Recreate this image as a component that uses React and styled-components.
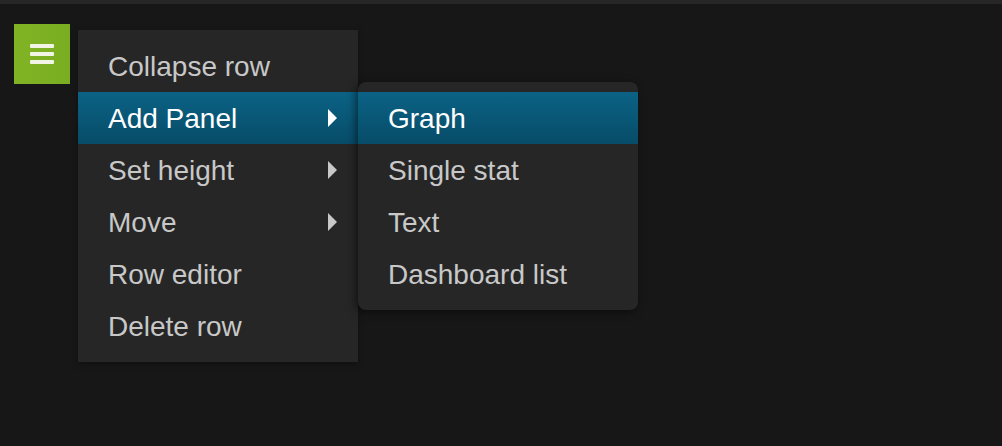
import React from 'react'
import styled, {createGlobalStyle} from 'styled-components'

const GlobalStyle = createGlobalStyle`
  html, body {
    margin: 0;
    padding: 0;
    background: #171717;
    font-family: "Liberation Sans", Arial, sans-serif;
  }
`

const Page = styled.div`
  width: 1002px;
  height: 446px;
  background: #171717;
  overflow: hidden;
`

const TopBar = styled.div`
  height: 4px;
  background: #262626;
`

const Row = styled.div`
  display: flex;
  align-items: flex-start;
  padding: 20px 0 0 14px;
`

const MenuButton = styled.button`
  width: 56px;
  height: 60px;
  border: 0;
  padding: 0;
  background: linear-gradient(90deg, #80b424, #7aae22);
  display: flex;
  flex-direction: column;
  align-items: center;
  justify-content: center;
  gap: 4px;
  margin-right: 8px;
`

const Bar = styled.span`
  display: block;
  width: 24px;
  height: 4px;
  border-radius: 1px;
  background: #f2f4e6;
`

const Menu = styled.ul`
  list-style: none;
  margin: 6px 0 0;
  padding: 10px 0;
  width: 280px;
  background: #262626;
  box-shadow: 0 2px 6px rgba(0, 0, 0, 0.35);
  ${(p) => p.sub && `
    position: absolute;
    left: 100%;
    top: -10px;
    margin: 0;
    border-radius: 8px;
    box-shadow: -2px 2px 8px rgba(0, 0, 0, 0.55);
    z-index: 2;
  `}
`

const Item = styled.li`
  position: relative;
  height: 52px;
  line-height: 54px;
  padding: 0 30px;
  font-size: 28px;
  color: ${(p) => (p.active ? '#ffffff' : '#c8c8c8')};
  background: ${(p) =>
    p.active ? 'linear-gradient(180deg, #0b6285, #074c68)' : 'transparent'};
  white-space: nowrap;
`

const Caret = styled.span`
  position: absolute;
  right: 21px;
  top: 17px;
  width: 0;
  height: 0;
  border-top: 9px solid transparent;
  border-bottom: 9px solid transparent;
  border-left: 9px solid ${(p) => (p.active ? '#ffffff' : '#c8c8c8')};
`

const subItems = ['Graph', 'Single stat', 'Text', 'Dashboard list']

const mainItems = [
  {label: 'Collapse row'},
  {label: 'Add Panel', caret: true, active: true, sub: subItems},
  {label: 'Set height', caret: true},
  {label: 'Move', caret: true},
  {label: 'Row editor'},
  {label: 'Delete row'},
]

export default function App() {
  return (
    <Page>
      <GlobalStyle />
      <TopBar />
      <Row>
        <MenuButton>
          <Bar />
          <Bar />
          <Bar />
        </MenuButton>
        <Menu>
          {mainItems.map((item) => (
            <Item key={item.label} active={item.active}>
              {item.label}
              {item.caret && <Caret active={item.active} />}
              {item.sub && (
                <Menu sub>
                  {item.sub.map((s, i) => (
                    <Item key={s} active={i === 0}>
                      {s}
                    </Item>
                  ))}
                </Menu>
              )}
            </Item>
          ))}
        </Menu>
      </Row>
    </Page>
  )
}
